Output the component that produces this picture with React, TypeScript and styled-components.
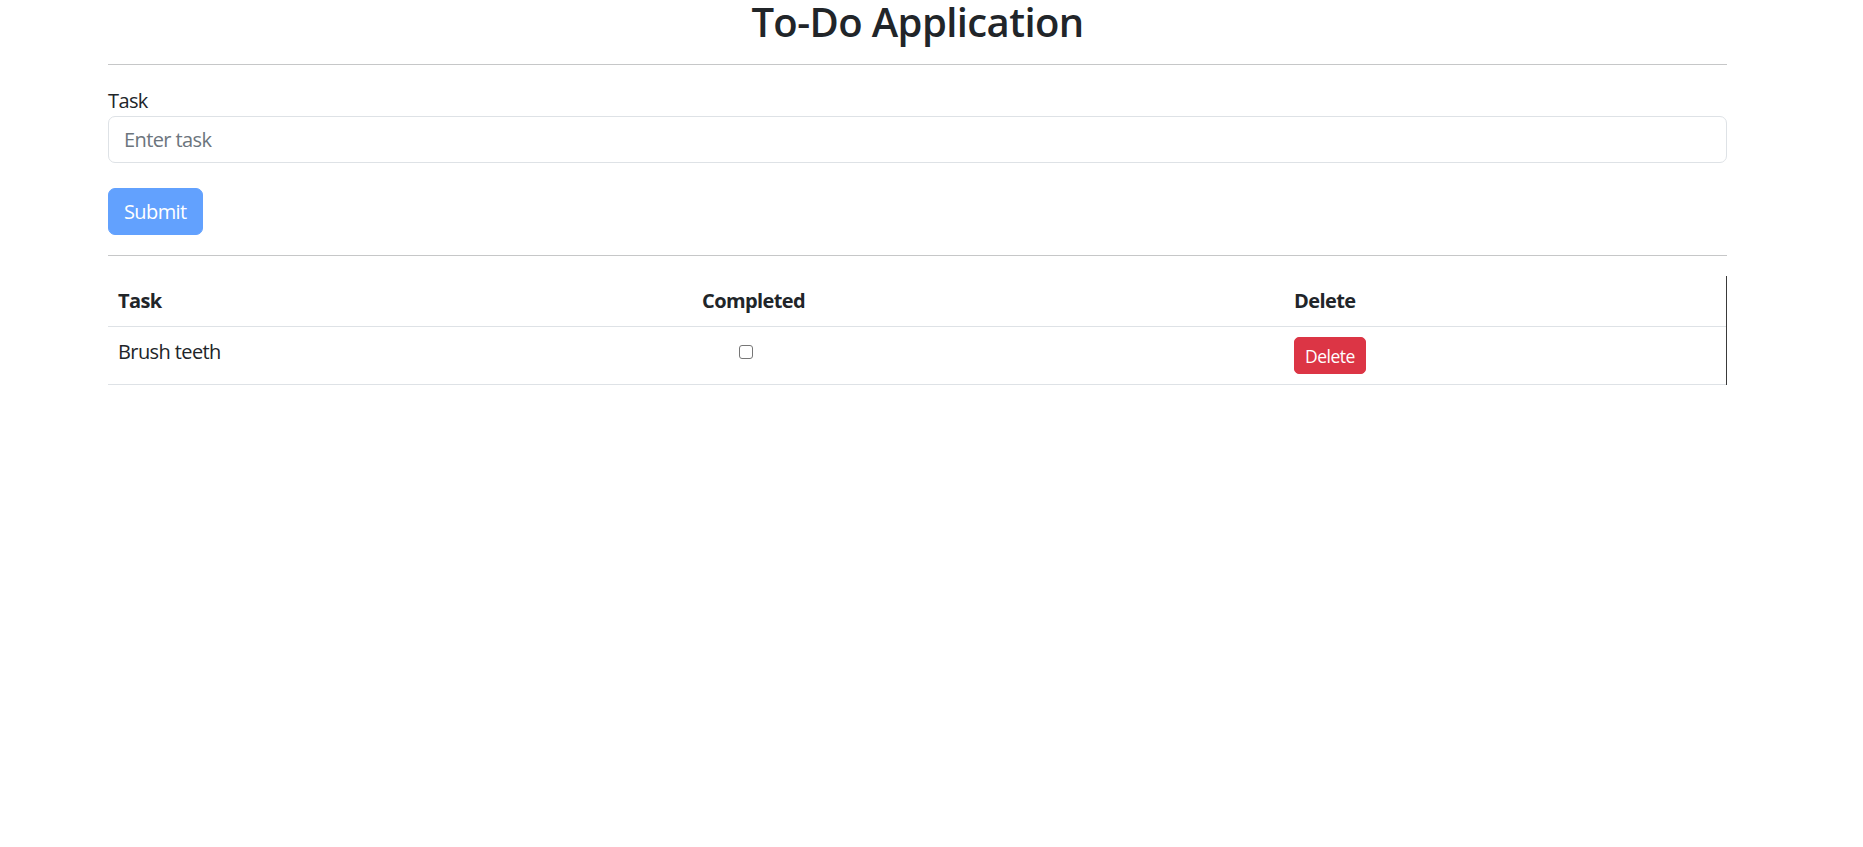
import React, { useState } from "react";
import styled, { createGlobalStyle } from "styled-components";

const GlobalStyle = createGlobalStyle`
  html, body {
    margin: 0;
    padding: 0;
    background: #ffffff;
  }
  body {
    font-family: "Open Sans", "Noto Sans", sans-serif;
    font-size: 20px;
    line-height: 30px;
    color: #212529;
    letter-spacing: -0.6px;
  }
  * { box-sizing: border-box; }
`;

const Page = styled.div`
  width: 1619px;
  margin-left: 108px;
`;

const Title = styled.h1`
  margin: 0;
  font-size: 40px;
  line-height: 44px;
  font-weight: 600;
  letter-spacing: -0.6px;
  text-align: center;
  color: #212529;
`;

const Rule = styled.hr<{ $top: number; $bottom: number }>`
  margin: ${(p) => p.$top}px 0 ${(p) => p.$bottom}px;
  border: 0;
  border-top: 1px solid #c6c7c8;
  height: 0;
`;

const Form = styled.form`
  display: flex;
  flex-direction: column;
  align-items: flex-start;
`;

const Label = styled.label`
  display: block;
  font-size: 20px;
  line-height: 30px;
`;

const TextInput = styled.input`
  display: block;
  width: 100%;
  height: 47px;
  padding: 7px 15px;
  font-family: inherit;
  font-size: 20px;
  line-height: 30px;
  letter-spacing: -0.6px;
  color: #212529;
  background: #fff;
  border: 1px solid #dee2e6;
  border-radius: 7px;
  outline: none;
  &::placeholder {
    color: #6c757d;
  }
`;

const SubmitButton = styled.button`
  margin-top: 25px;
  height: 47px;
  padding: 7px 15px;
  font-family: inherit;
  font-size: 20px;
  line-height: 30px;
  letter-spacing: -0.6px;
  color: #fff;
  background: #62a1fe;
  border: 1px solid #62a1fe;
  border-radius: 7px;
  cursor: default;
`;

const TableWrap = styled.div`
  border-right: 1px solid #3a3a3a;
`;

const Table = styled.table`
  width: 100%;
  border-collapse: collapse;
  table-layout: fixed;
`;

const HeadCell = styled.th<{ $width?: number }>`
  width: ${(p) => (p.$width ? `${p.$width}px` : "auto")};
  padding: 10px;
  text-align: left;
  font-weight: 700;
  font-size: 20px;
  line-height: 30px;
  border-bottom: 1px solid #dee2e6;
  vertical-align: top;
`;

const Cell = styled.td`
  padding: 10px;
  font-size: 20px;
  line-height: 30px;
  border-bottom: 1px solid #dee2e6;
  vertical-align: top;
`;

const CheckWrap = styled.div`
  padding-left: 37px;
  height: 30px;
  display: flex;
  align-items: center;
`;

const CheckBox = styled.input`
  width: 14px;
  height: 14px;
  margin: 0;
  appearance: none;
  border: 1px solid #767676;
  border-radius: 3px;
  background: #fff;
`;

const DeleteButton = styled.button`
  display: block;
  height: 37px;
  padding: 4px 10px;
  font-family: inherit;
  font-size: 17.5px;
  line-height: 26px;
  letter-spacing: -0.5px;
  color: #fff;
  background: #dc3545;
  border: 1px solid #dc3545;
  border-radius: 5px;
`;

export default function App() {
  const [task, setTask] = useState("");
  const [done, setDone] = useState(false);
  return (
    <>
      <GlobalStyle />
      <Page>
        <Title>To-Do Application</Title>
        <Rule $top={20} $bottom={21} />
        <Form onSubmit={(e) => e.preventDefault()}>
          <Label htmlFor="task">Task</Label>
          <TextInput
            id="task"
            placeholder="Enter task"
            value={task}
            onChange={(e) => setTask(e.target.value)}
          />
          <SubmitButton type="submit" disabled>
            Submit
          </SubmitButton>
        </Form>
        <Rule $top={20} $bottom={20} />
        <TableWrap>
          <Table>
            <thead>
              <tr>
                <HeadCell $width={584}>Task</HeadCell>
                <HeadCell $width={592}>Completed</HeadCell>
                <HeadCell>Delete</HeadCell>
              </tr>
            </thead>
            <tbody>
              <tr>
                <Cell>Brush teeth</Cell>
                <Cell>
                  <CheckWrap>
                    <CheckBox
                      type="checkbox"
                      checked={done}
                      onChange={(e) => setDone(e.target.checked)}
                    />
                  </CheckWrap>
                </Cell>
                <Cell>
                  <DeleteButton type="button">Delete</DeleteButton>
                </Cell>
              </tr>
            </tbody>
          </Table>
        </TableWrap>
      </Page>
    </>
  );
}
